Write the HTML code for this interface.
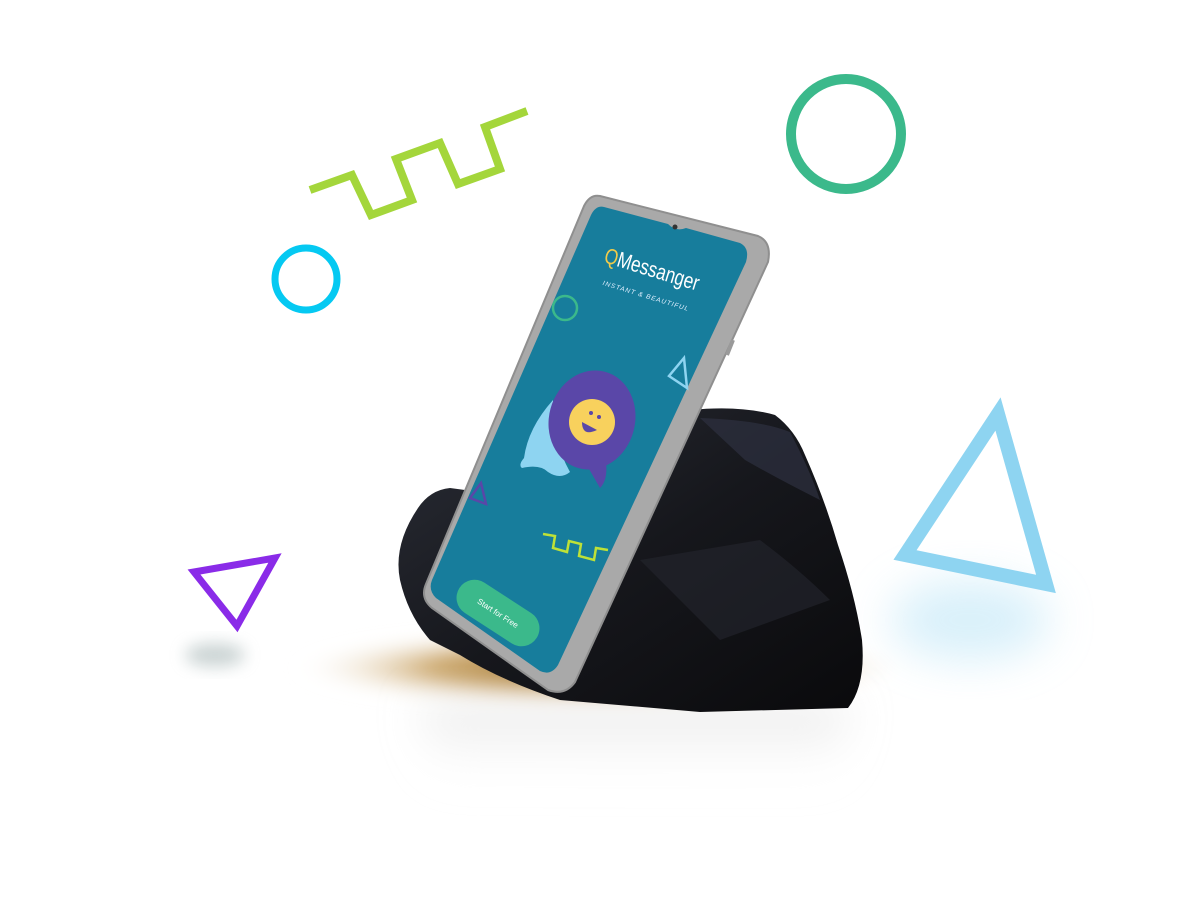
<!DOCTYPE html>
<html><head><style>
html,body{margin:0;padding:0;background:#fff;width:1200px;height:900px;overflow:hidden}
</style></head><body>
<svg width="1200" height="900" viewBox="0 0 1200 900" xmlns="http://www.w3.org/2000/svg">
<defs>
<filter id="b8" x="-50%" y="-50%" width="200%" height="200%"><feGaussianBlur stdDeviation="8"/></filter>
<filter id="b20" x="-50%" y="-50%" width="200%" height="200%"><feGaussianBlur stdDeviation="22"/></filter>
<radialGradient id="gold" cx="50%" cy="50%" r="50%">
<stop offset="0" stop-color="#8a5a10"/><stop offset="0.55" stop-color="#c49a55" stop-opacity="0.8"/><stop offset="1" stop-color="#fff" stop-opacity="0"/></radialGradient>
<linearGradient id="rock" x1="0" y1="0" x2="1" y2="1"><stop offset="0" stop-color="#2a2d36"/><stop offset="0.5" stop-color="#16171c"/><stop offset="1" stop-color="#0a0a0c"/></linearGradient>
<linearGradient id="refl" x1="0" y1="0" x2="0" y2="1"><stop offset="0" stop-color="#d0d0d0" stop-opacity="0.6"/><stop offset="1" stop-color="#fff" stop-opacity="0"/></linearGradient>
</defs>

<ellipse cx="600" cy="668" rx="310" ry="40" fill="url(#gold)" filter="url(#b8)"/>
<path d="M420 705 L850 705 L830 780 L440 775 Z" fill="url(#refl)" filter="url(#b20)"/>
<ellipse cx="970" cy="620" rx="80" ry="40" fill="#bfe6f7" opacity="0.6" filter="url(#b20)"/>
<ellipse cx="215" cy="655" rx="30" ry="12" fill="#9aa" opacity="0.5" filter="url(#b8)"/>

<path d="M418 508 Q430 490 450 488 L480 492 Q520 460 570 440 Q630 420 690 410 Q740 405 775 415 Q795 430 805 455 Q825 500 838 545 Q855 595 862 640 Q866 685 848 708 L700 712 L560 700 Q500 680 460 655 L430 640 Q408 615 400 580 Q393 545 418 508 Z" fill="url(#rock)"/>
<path d="M700 418 Q760 420 790 432 Q810 470 820 500 Q780 480 745 460 Z" fill="#2e3140" opacity="0.7"/>
<path d="M640 560 L760 540 Q800 570 830 600 L720 640 Z" fill="#25272e" opacity="0.6"/>

<polyline points="310,190 352,175 371,215 412,200 396,159 440,143 458,184 500,169 485,127 527,111" fill="none" stroke="#a4d63b" stroke-width="8"/>
<circle cx="846" cy="134" r="55" fill="none" stroke="#3bb98b" stroke-width="10"/>
<circle cx="306" cy="279" r="31" fill="none" stroke="#05c9f2" stroke-width="7"/>
<polygon points="194,572 275,558 237,626" fill="none" stroke="#8a2be8" stroke-width="7"/>
<polygon points="998,414 1046,584 905,555" fill="none" stroke="#8ed4f1" stroke-width="14"/>

<path d="M600 196 L758 236 Q772 242 768 262 L575 682 Q565 696 548 690 L432 608 Q420 598 426 584 L584 206 Q590 194 600 196 Z" fill="#a9a9a9" stroke="#8f8f8f" stroke-width="2"/>
<path d="M733 340 L727 355" stroke="#9a9a9a" stroke-width="4"/>
<path d="M604 207 L668 224 Q676 232 686 228 L740 243 Q750 248 746 262 L558 665 Q551 676 540 671 L436 598 Q428 590 432 580 L591 215 Q596 205 604 207 Z" fill="#177d9c"/>
<circle cx="675" cy="227" r="2.5" fill="#333"/>

<g transform="translate(603,262) rotate(17)">
<text x="0" y="0" font-family="Liberation Sans, sans-serif" font-size="22" fill="#fff" textLength="98" lengthAdjust="spacingAndGlyphs"><tspan fill="#f2cc4a">Q</tspan>Messanger</text>
<text x="6" y="22" font-family="Liberation Sans, sans-serif" font-size="6.5" fill="#dfefff" letter-spacing="1" font-style="italic">INSTANT &amp; BEAUTIFUL</text>
</g>
<circle cx="565" cy="308" r="12" fill="none" stroke="#3bb98b" stroke-width="2.5"/>
<polygon points="684,358 687,388 669,376" fill="none" stroke="#8ed4f1" stroke-width="2.5"/>
<path d="M553 400 Q528 428 524 458 Q518 465 522 468 Q540 464 548 472 Q560 480 570 472 Q552 440 553 400 Z" fill="#8ed4f1"/>
<ellipse cx="592" cy="420" rx="43" ry="50" transform="rotate(15 592 420)" fill="#5a47a8"/>
<path d="M585 462 L600 488 Q608 480 606 462 Z" fill="#5a47a8"/>
<circle cx="592" cy="422" r="23" fill="#f8d15d"/>
<circle cx="591" cy="413" r="2" fill="#5a47a8"/><circle cx="599" cy="417" r="2" fill="#5a47a8"/>
<path d="M582 422 Q582 437 597 430 Z" fill="#5a47a8"/>
<polygon points="481,483 486,504 470,498" fill="none" stroke="#5a47a8" stroke-width="2.5"/>
<polyline points="543,534 555,536 553,548 567,552 569,541 581,544 579,556 594,560 596,548 608,550" fill="none" stroke="#bee137" stroke-width="2.5"/>
<g transform="translate(498,613) rotate(33)">
<rect x="-46" y="-18" width="92" height="36" rx="18" fill="#3bb98b"/>
<text x="0" y="3" text-anchor="middle" font-family="Liberation Sans, sans-serif" font-size="8" fill="#fff">Start for Free</text>
</g>
</svg>
</body></html>
